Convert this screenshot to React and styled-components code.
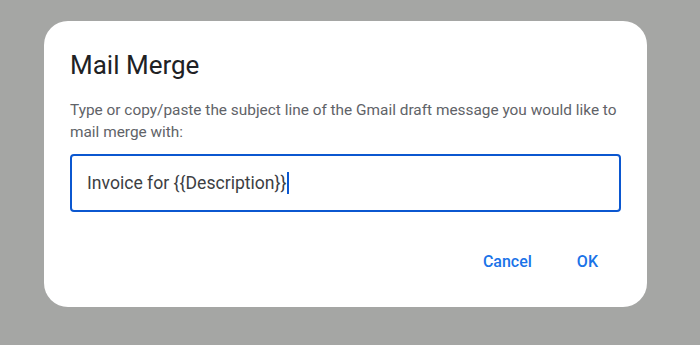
import React from "react";
import styled, { createGlobalStyle } from "styled-components";

const Global = createGlobalStyle`
  html, body { margin: 0; padding: 0; background: #a5a6a4; }
  body { font-family: Roboto, "Open Sans", Arial, sans-serif; }
  * { box-sizing: border-box; }
`;

const Backdrop = styled.div`
  width: 700px;
  height: 345px;
  padding: 21px 0 0 44px;
  background: #a5a6a4;
`;

const Dialog = styled.div`
  width: 603px;
  height: 286px;
  background: #ffffff;
  border-radius: 24px;
  padding: 28px 26px 28px 26px;
  display: flex;
  flex-direction: column;
`;

const Title = styled.h1`
  margin: 0;
  font-size: 26px;
  line-height: 32px;
  font-weight: 400;
  color: #202124;
`;

const Description = styled.p`
  margin: 18px 0 0 0;
  font-size: 15.4px;
  line-height: 22px;
  color: #5f6368;
`;

const Field = styled.div`
  margin-top: 11px;
  height: 58px;
  border: 2px solid #0b57d0;
  border-radius: 4px;
  padding: 0 15px;
  display: flex;
  align-items: center;
  font-size: 17.6px;
  color: #3c4043;
`;

const Caret = styled.span`
  display: inline-block;
  width: 1.5px;
  height: 22px;
  background: #0b57d0;
  margin-left: 1px;
`;

const Actions = styled.div`
  margin-top: 31px;
  display: flex;
  justify-content: flex-end;
  gap: 21px;
  padding-right: 11px;
`;

const TextButton = styled.button`
  height: 36px;
  padding: 0 12px;
  border: none;
  background: transparent;
  font-family: inherit;
  font-size: 16px;
  font-weight: 500;
  color: #1a73e8;
  cursor: pointer;
`;

export default function App() {
  return (
    <>
      <Global />
      <Backdrop>
        <Dialog>
          <Title>Mail Merge</Title>
          <Description>
            Type or copy/paste the subject line of the Gmail draft message you would like to mail merge with:
          </Description>
          <Field>
            Invoice for {"{{Description}}"}
            <Caret />
          </Field>
          <Actions>
            <TextButton>Cancel</TextButton>
            <TextButton>OK</TextButton>
          </Actions>
        </Dialog>
      </Backdrop>
    </>
  );
}
